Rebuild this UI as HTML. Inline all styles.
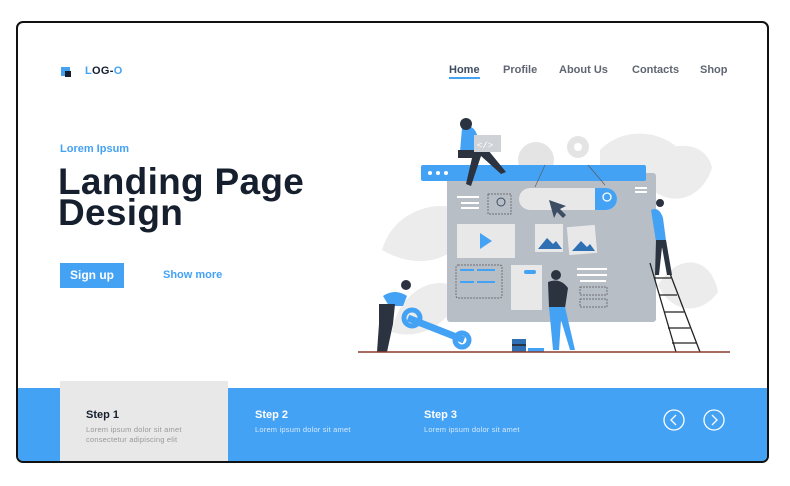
<!DOCTYPE html>
<html><head><meta charset="utf-8"><style>
*{margin:0;padding:0;box-sizing:border-box}
body{width:790px;height:486px;background:#fff;font-family:"Liberation Sans",Arial,sans-serif;position:relative;overflow:hidden}
.frame{position:absolute;left:16px;top:21px;width:753px;height:442px;border:2px solid #111;border-radius:7px;overflow:hidden;background:#fff}
.a{position:absolute}
.nav{font-size:11px;font-weight:bold;color:#5f6672;top:41px}
.band{left:0;top:365px;width:749px;height:75px;background:#44a2f5}
.s1{left:42px;top:358px;width:168px;height:82px;background:#e8e8e8}
.st{font-size:11px;font-weight:bold}
.sd{font-size:7.5px;line-height:10px;letter-spacing:.2px}
</style></head><body>
<div class="frame">
 <div class="a" style="left:43px;top:44px;width:9px;height:9px;background:#44a2f5"></div>
 <div class="a" style="left:47px;top:48px;width:6px;height:6px;background:#151f2e"></div>
 <div class="a" style="left:67px;top:42px;font-size:11px;font-weight:bold;color:#151f2e;letter-spacing:.3px"><span style="color:#44a2f5">L</span>OG-<span style="color:#44a2f5">O</span></div>
 <div class="a nav" style="left:431px;color:#3d4d63">Home<div style="height:2px;background:#44a2f5;margin-top:1px"></div></div>
 <div class="a nav" style="left:485px">Profile</div>
 <div class="a nav" style="left:541px">About Us</div>
 <div class="a nav" style="left:614px">Contacts</div>
 <div class="a nav" style="left:682px">Shop</div>
 <div class="a" style="left:42px;top:120px;font-size:11px;font-weight:bold;color:#44a2f5">Lorem Ipsum</div>
 <div class="a" style="left:40px;top:143px;font-size:37px;line-height:31px;font-weight:900;color:#151f2e;letter-spacing:.3px">Landing Page<br>Design</div>
 <div class="a" style="left:42px;top:240px;width:64px;height:25px;background:#44a2f5;color:#fff;font-size:12px;font-weight:bold;text-align:center;line-height:25px">Sign up</div>
 <div class="a" style="left:145px;top:246px;font-size:11px;font-weight:bold;color:#44a2f5">Show more</div>

 <svg class="a" style="left:0;top:0" width="749" height="438" viewBox="18 23 749 438">
  <g fill="#ececec">
   <path d="M382 250 C395 205 450 195 475 218 C465 255 425 275 382 250Z"/>
   <path d="M392 332 C398 290 440 270 462 292 C452 322 420 342 392 332Z"/>
   <path d="M640 175 C655 140 705 135 712 168 C700 205 660 210 640 175Z"/>
   <path d="M658 285 C680 250 712 258 718 292 C702 315 672 315 658 285Z"/>
   <path d="M600 150 C625 125 665 130 685 155 L690 180 L600 180Z"/>
  </g>
  <circle cx="536" cy="160" r="18" fill="#e4e4e4"/>
  <circle cx="578" cy="147" r="11" fill="#e4e4e4"/><circle cx="578" cy="147" r="4" fill="#fff"/>
  <rect x="447" y="173" width="209" height="149" rx="3" fill="#b8bec6"/>
  <rect x="421" y="165" width="225" height="16" rx="2" fill="#44a2f5"/>
  <circle cx="430" cy="173" r="2" fill="#fff"/><circle cx="438" cy="173" r="2" fill="#fff"/><circle cx="446" cy="173" r="2" fill="#fff"/>
  <rect x="519" y="188" width="98" height="22" rx="11" fill="#e8e8e8"/>
  <path d="M595 188 h11 a11 11 0 0 1 0 22 h-11z" fill="#44a2f5"/>
  <circle cx="607" cy="197" r="4" fill="none" stroke="#fff" stroke-width="1.3"/>
  <path d="M549 200 l5 18 l3-6 l6 6 l3-3 l-6-6 l6-3z" fill="#3d4d63"/>
  <line x1="535" y1="187" x2="545" y2="165" stroke="#555" stroke-width=".6"/>
  <line x1="588" y1="165" x2="605" y2="185" stroke="#555" stroke-width=".6"/>
  <rect x="488" y="194" width="23" height="20" fill="none" stroke="#555" stroke-dasharray="2 1" stroke-width=".7"/>
  <circle cx="501" cy="202" r="4" fill="none" stroke="#3d4d63"/>
  <g fill="#fff"><rect x="457" y="196" width="22" height="2"/><rect x="461" y="202" width="18" height="2"/><rect x="461" y="207" width="18" height="2"/><rect x="635" y="187" width="12" height="2"/><rect x="635" y="191" width="12" height="2"/><rect x="577" y="268" width="30" height="2"/><rect x="577" y="274" width="30" height="2"/><rect x="580" y="280" width="26" height="2"/></g>
  <rect x="457" y="224" width="58" height="34" fill="#e8e8e8"/>
  <path d="M480 233 l12 8 l-12 8z" fill="#44a2f5"/>
  <rect x="535" y="224" width="28" height="28" fill="#e8e8e8"/>
  <path d="M538 249 l9-11 l6 6 l3-3 l6 8z" fill="#2f6fb4"/>
  <rect x="568" y="226" width="28" height="28" fill="#e8e8e8" transform="rotate(-5 582 240)"/>
  <path d="M572 251 l9-10 l6 6 l3-3 l5 7z" fill="#2f6fb4"/>
  <rect x="456" y="265" width="46" height="33" rx="2" fill="none" stroke="#555" stroke-dasharray="2 1" stroke-width=".7"/>
  <g fill="#44a2f5"><rect x="460" y="269" width="14" height="2"/><rect x="477" y="269" width="18" height="2"/><rect x="460" y="281" width="14" height="2"/><rect x="477" y="281" width="18" height="2"/></g>
  <rect x="511" y="265" width="31" height="45" fill="#e8e8e8"/>
  <rect x="580" y="287" width="27" height="8" fill="none" stroke="#555" stroke-dasharray="2 1" stroke-width=".7"/>
  <rect x="580" y="299" width="27" height="8" fill="none" stroke="#555" stroke-dasharray="2 1" stroke-width=".7"/>
  <g stroke="#222" stroke-width="1.3"><line x1="650" y1="263" x2="676" y2="352"/><line x1="666" y1="263" x2="700" y2="352"/>
   <line x1="654" y1="278" x2="671" y2="278"/><line x1="659" y1="295" x2="677" y2="295"/><line x1="664" y1="312" x2="684" y2="312"/><line x1="668" y1="328" x2="690" y2="328"/><line x1="672" y1="343" x2="697" y2="343"/></g>
  <path d="M651 210 q8-4 12 8 l4 30 l-10 0z" fill="#44a2f5"/>
  <path d="M656 240 h10 l6 35 h-5 l-5-28 l-3 28 h-4z" fill="#2b3340"/>
  <circle cx="660" cy="203" r="4" fill="#2b3340"/>
  <path d="M462 128 q12-6 16 10 l2 12 l-20 2z" fill="#44a2f5"/>
  <circle cx="466" cy="124" r="6" fill="#2b3340"/>
  <path d="M458 150 h30 l18 22 l-5 2 l-20-18 l-10 30 l-5-2 l6-26 h-14z" fill="#2b3340"/>
  <rect x="474" y="135" width="27" height="17" fill="#cfd3d8"/>
  <text x="477" y="148" font-size="9" fill="#fff" font-family="Liberation Mono">&lt;/&gt;</text>
  <path d="M383 296 q12-8 24 0 l-4 10 h-14z" fill="#44a2f5"/>
  <circle cx="406" cy="285" r="5" fill="#2b3340"/>
  <path d="M379 304 h16 l-2 20 l-6 28 h-5 l5-26 l-5 26 h-5 l2-28z" fill="#2b3340"/>
  <path d="M408 318 l56 22" stroke="#44a2f5" stroke-width="7"/>
  <circle cx="412" cy="318" r="8" fill="none" stroke="#44a2f5" stroke-width="5"/>
  <circle cx="462" cy="340" r="7" fill="none" stroke="#44a2f5" stroke-width="5"/>
  <path d="M548 282 q12-5 20 6 l-3 20 h-16z" fill="#2b3340"/>
  <circle cx="556" cy="275" r="5" fill="#2b3340"/>
  <path d="M549 307 h16 l10 43 h-5 l-9-30 l-2 30 h-6z" fill="#44a2f5"/>
  <rect x="524" y="270" width="12" height="4" rx="2" fill="#44a2f5"/>
  <rect x="512" y="339" width="14" height="13" fill="#2f6fb4"/><rect x="512" y="344" width="14" height="2" fill="#2b3340"/>
  <rect x="528" y="348" width="16" height="4" fill="#44a2f5"/>
  <line x1="358" y1="352" x2="730" y2="352" stroke="#8a3a2a" stroke-width="1.5"/>
 </svg>

 <div class="a band"></div>
 <div class="a s1"></div>
 <div class="a st" style="left:68px;top:386px;color:#151f2e">Step 1</div>
 <div class="a sd" style="left:68px;top:402px;color:#999">Lorem ipsum dolor sit amet<br>consectetur adipiscing elit</div>
 <div class="a st" style="left:237px;top:386px;color:#fff">Step 2</div>
 <div class="a sd" style="left:237px;top:402px;color:#d5e8fc">Lorem ipsum dolor sit amet</div>
 <div class="a st" style="left:406px;top:386px;color:#fff">Step 3</div>
 <div class="a sd" style="left:406px;top:402px;color:#d5e8fc">Lorem ipsum dolor sit amet</div>
 <svg class="a" style="left:644px;top:385px" width="65" height="24">
  <circle cx="12" cy="12" r="10" fill="none" stroke="#fff" stroke-width="1.3"/><path d="M14 7 l-5 5 l5 5" fill="none" stroke="#fff" stroke-width="1.3"/>
  <circle cx="52" cy="12" r="10" fill="none" stroke="#fff" stroke-width="1.3"/><path d="M50 7 l5 5 l-5 5" fill="none" stroke="#fff" stroke-width="1.3"/>
 </svg>
</div>
</body></html>
